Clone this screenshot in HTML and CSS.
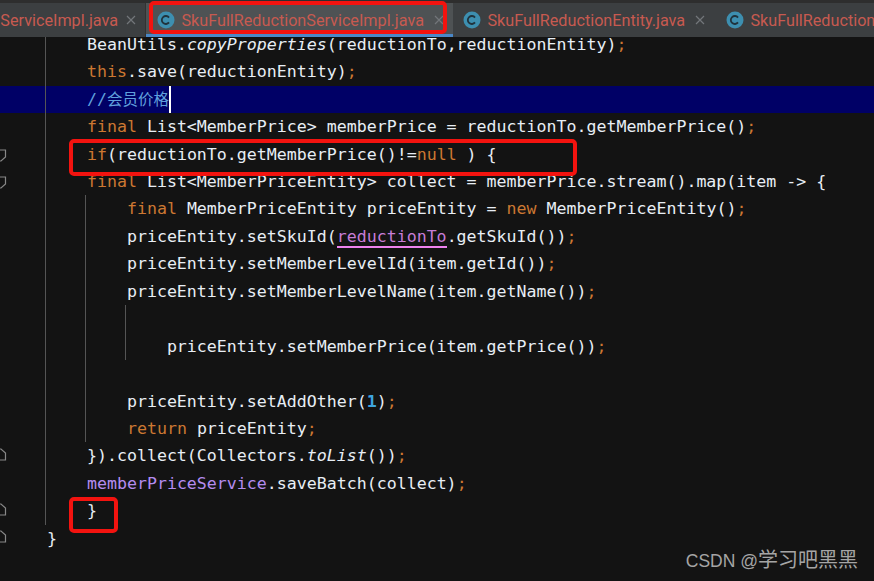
FILE: index.html
```html
<!DOCTYPE html>
<html lang="en">
<head>
<meta charset="utf-8">
<title>SkuFullReductionServiceImpl.java</title>
<link rel="stylesheet" href="styles.css">
</head>
<body>
<div class="window">
  <div class="tabbar">
    <div class="tab tab-first"><span class="tab-name">ServiceImpl.java</span><svg class="close" viewBox="0 0 10 10"><path d="M1 1l8 8M9 1l-8 8"/></svg></div>
    <div class="tab tab-active"><svg class="cicon" viewBox="0 0 18 18"><circle cx="9" cy="9" r="8.5"/><path d="M12 6.6a4 4 0 1 0 0 4.8"/></svg><span class="tab-name">SkuFullReductionServiceImpl.java</span><svg class="close" viewBox="0 0 10 10"><path d="M1 1l8 8M9 1l-8 8"/></svg></div>
    <div class="tab tab-third"><svg class="cicon" viewBox="0 0 18 18"><circle cx="9" cy="9" r="8.5"/><path d="M12 6.6a4 4 0 1 0 0 4.8"/></svg><span class="tab-name">SkuFullReductionEntity.java</span><svg class="close" viewBox="0 0 10 10"><path d="M1 1l8 8M9 1l-8 8"/></svg></div>
    <div class="tab tab-last"><svg class="cicon" viewBox="0 0 18 18"><circle cx="9" cy="9" r="8.5"/><path d="M12 6.6a4 4 0 1 0 0 4.8"/></svg><span class="tab-name">SkuFullReductionController.java</span></div>
  </div>
  <div class="editor">
    <div class="line">    BeanUtils.<i>copyProperties</i>(reductionTo,reductionEntity)<b class="k">;</b></div>
    <div class="line">    <b class="k">this</b>.save(reductionEntity)<b class="k">;</b></div>
    <div class="line line-current">    <span class="comment">//<span class="cjk">会员价格</span></span><span class="caret"></span></div>
    <div class="line">    <b class="k">final</b> List&lt;MemberPrice&gt; memberPrice = reductionTo.getMemberPrice()<b class="k">;</b></div>
    <div class="line">    <b class="k">if</b>(reductionTo.getMemberPrice()!=<b class="k">null</b> ) {</div>
    <div class="line">    <b class="k">final</b> List&lt;MemberPriceEntity&gt; collect = memberPrice.stream().map(item -&gt; {</div>
    <div class="line">        <b class="k">final</b> MemberPriceEntity priceEntity = <b class="k">new</b> MemberPriceEntity()<b class="k">;</b></div>
    <div class="line">        priceEntity.setSkuId(<span class="captured">reductionTo</span>.getSkuId())<b class="k">;</b></div>
    <div class="line">        priceEntity.setMemberLevelId(item.getId())<b class="k">;</b></div>
    <div class="line">        priceEntity.setMemberLevelName(item.getName())<b class="k">;</b></div>
    <div class="line"> </div>
    <div class="line">            priceEntity.setMemberPrice(item.getPrice())<b class="k">;</b></div>
    <div class="line"> </div>
    <div class="line">        priceEntity.setAddOther(<span class="num">1</span>)<b class="k">;</b></div>
    <div class="line">        <b class="k">return</b> priceEntity<b class="k">;</b></div>
    <div class="line">    }).collect(Collectors.<i>toList</i>())<b class="k">;</b></div>
    <div class="line">    <span class="field">memberPriceService</span>.saveBatch(collect)<b class="k">;</b></div>
    <div class="line">    }</div>
    <div class="line">}</div>
  </div>

  <span class="guide guide-outer"></span>
  <span class="guide guide-inner"></span>
  <span class="guide guide-deep"></span>

  <svg class="fold fold-1" viewBox="0 0 7 13"><path d="M-3 1H5.500V8L1 12H-3"/></svg>
  <svg class="fold fold-2" viewBox="0 0 7 13"><path d="M-3 1H5.500V8L1 12H-3"/></svg>
  <svg class="fold fold-3" viewBox="0 0 7 13"><path d="M-3 12H5.500V5L1 1H-3"/></svg>
  <svg class="fold fold-4" viewBox="0 0 7 13"><path d="M-3 12H5.500V5L1 1H-3"/></svg>
  <svg class="fold fold-5" viewBox="0 0 7 13"><path d="M-3 12H5.500V5L1 1H-3"/></svg>

  <span class="mark mark-tab"></span>
  <span class="mark mark-if"></span>
  <span class="mark mark-brace"></span>

  <span class="watermark">CSDN @<span class="watermark-cjk">学习吧黑黑</span></span>
</div>
</body>
</html>
```
FILE: styles.css
```css
* { box-sizing: border-box; }
html, body { margin: 0; padding: 0; background: #131313; }
.window {
  position: relative;
  width: 874px;
  height: 581px;
  overflow: hidden;
  background: #131313;
}
.tabbar {
  position: relative;
  z-index: 1;
  display: flex;
  height: 37px;
  margin-bottom: -6.2px;
  border-top: 3px solid #2e2e2e;
  background: #3c3f41;
  font: 16.2px "Roboto", "Liberation Sans", sans-serif;
  color: #c75a50;
  white-space: nowrap;
}
.tab {
  display: flex;
  align-items: center;
  flex: none;
  height: 34px;
}
.tab-first { width: 146px; justify-content: flex-end; padding-right: 9px; border-right: 1px solid #323232; }
.tab-first .close { margin-left: 8px; }
.tab-first .tab-name { margin-left: 0; }
.tab-active {
  width: 307px;
  padding-left: 11px;
  background: #4e5254;
  border-bottom: 3px solid #4a88c7;
  padding-top: 3px;
}
.tab-third { width: 263px; padding-left: 10px; }
.tab-last { padding-left: 10px; }
.tab-name { margin-left: 6.500px; }
.cicon { width: 18px; height: 18px; flex: none; }
.cicon circle { fill: #3d8fb0; }
.cicon path { fill: none; stroke: #20333d; stroke-width: 1.8; }
.close { width: 10px; height: 10px; margin-left: 10px; flex: none; }
.close path { fill: none; stroke: #72767a; stroke-width: 1.2; }
.editor {
  font: 16.6px/27.44px "DejaVu Sans Mono", "Liberation Mono", monospace;
  color: #e8eef5;
}
.line { height: 27.44px; padding-left: 47px; white-space: pre; }
.line-current { background: #000066; }
.k { font-weight: normal; color: #cc7832; }
.comment { color: #5f9fdc; }
.cjk { font: 15.5px "Noto Sans CJK SC", sans-serif; }
.caret { display: inline-block; width: 2px; height: 27px; vertical-align: top; background: #fff; }
.captured { color: #c77dd8; border-bottom: 2px solid #ee82ee; }
.num { color: #3ea6e0; font-weight: bold; }
.field { color: #b48cf0; }
.guide { position: absolute; width: 1px; background: #555; }
.guide-outer { left: 45px; top: 37px; height: 488px; }
.guide-inner { left: 85px; top: 195px; height: 247px; }
.guide-deep { left: 125px; top: 305px; height: 55px; }
.fold { position: absolute; left: 0; width: 7px; height: 13px; }
.fold path { fill: none; stroke: #888; stroke-width: 1.2; }
.fold-1 { top: 149px; }
.fold-2 { top: 176px; }
.fold-3 { top: 448px; }
.fold-4 { top: 503px; }
.fold-5 { top: 530px; }
.mark { position: absolute; z-index: 2; border: 4px solid #f3130f; border-radius: 5px; }
.mark-tab { left: 149px; top: 1px; width: 298px; height: 33px; }
.mark-if { left: 69px; top: 139px; width: 508px; height: 37px; }
.mark-brace { left: 69px; top: 497px; width: 49px; height: 36px; }
.watermark {
  position: absolute;
  right: 16px;
  top: 544px;
  font: 17.500px "Liberation Sans", "Noto Sans CJK SC", sans-serif;
  color: #a5a5a5;
  white-space: nowrap;
}
.watermark-cjk { font: 20px "Noto Sans CJK SC", sans-serif; }
```
